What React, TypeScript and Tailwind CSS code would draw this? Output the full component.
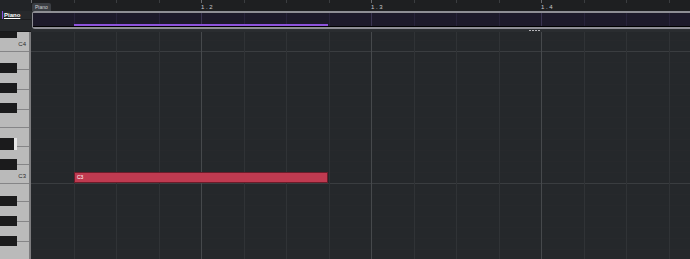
import React from "react";
import clsx from "clsx";

const COLS = Array.from({ length: 16 }, (_, i) => i);

// white keys from top of the keyboard (y 32), heights include the bottom border
const whiteKeys: { h: string; label?: string }[] = [
  { h: "h-[20px]", label: "C4" },
  { h: "h-[18px]" },
  { h: "h-[20px]" },
  { h: "h-[20px]" },
  { h: "h-[18px]" },
  { h: "h-[19px]" },
  { h: "h-[18px]" },
  { h: "h-[19px]", label: "C3" },
  { h: "h-[18px]" },
  { h: "h-[20px]" },
  { h: "h-[20px]" },
  { h: "h-[20px]" },
];

const blackKeys = [
  "top-[-5px] h-[11px]",
  "top-[31px] h-[10px]",
  "top-[51px] h-[10px]",
  "top-[71px] h-[10px]",
  "top-[127px] h-[11px]",
  "top-[164px] h-[10px]",
  "top-[184px] h-[10px]",
  "top-[204px] h-[10px]",
];

const Columns: React.FC<{ minor: string; major: string }> = ({ minor, major }) => (
  <div className="pointer-events-none absolute inset-y-0 left-0 flex">
    {COLS.map((i) => (
      <div
        key={i}
        className={clsx(
          "w-[42.5px] shrink-0",
          i === 0 ? "" : "border-l",
          i % 4 === 0 ? major : minor
        )}
      />
    ))}
  </div>
);

const Ruler: React.FC = () => (
  <div className="relative flex h-[11px] overflow-hidden bg-[#1e1f21]">
    {COLS.map((i) => (
      <div key={i} className="flex w-[42.5px] shrink-0 flex-col">
        <div className={clsx("w-px", i % 4 === 0 ? "h-[3px] bg-[#6a6c70]" : "h-[3px] bg-[#3b3d40]")} />
        {i % 4 === 0 && i > 0 && (
          <span className="mt-[1px] whitespace-nowrap text-[6px] leading-none text-[#c9c9cc]">
            {`1 . ${i / 4 + 1}`}
          </span>
        )}
      </div>
    ))}
    <div className="absolute left-[1px] top-[3px] flex h-[8px] items-center rounded-t-[2px] bg-[#3b3e43] px-[3px]">
      <span className="text-[5px] leading-none text-[#d0d0d4]">Piano</span>
    </div>
  </div>
);

const Lane: React.FC = () => (
  <div className="flex h-[21px] flex-col">
    <div className="ml-[1px] flex h-[18px] flex-col rounded-l-[3px] border-y-2 border-l border-[#8e8e94]">
      <div className="relative flex flex-1 flex-col justify-end overflow-hidden border-b border-black bg-[#1d1a2a]">
        <div className="absolute inset-y-0 left-[-2px]">
          <Columns minor="border-[#28233a]" major="border-[#3a3450]" />
        </div>
        <div className="relative ml-[41px] h-[2px] w-[254px] bg-[#8d52dc]" />
      </div>
    </div>
    <div className="flex h-[3px] items-end gap-[1px] bg-[#2a2d30] pb-[1px] pl-[498px]">
      <div className="h-px w-[2px] bg-[#b4b4b8]" />
      <div className="h-px w-[2px] bg-[#b4b4b8]" />
      <div className="h-px w-[2px] bg-[#b4b4b8]" />
      <div className="h-px w-[2px] bg-[#b4b4b8]" />
    </div>
  </div>
);

const Keyboard: React.FC = () => (
  <div className="relative w-[31px] shrink-0 overflow-hidden border-r-2 border-[#7c7c7e]">
    <div className="flex flex-col">
      {whiteKeys.map((k, i) => (
        <div
          key={i}
          className={clsx(
            "flex shrink-0 items-end justify-end border-b border-[#858587] bg-[#bababa] pb-[4px] pr-[3px]",
            k.h
          )}
        >
          {k.label && (
            <span className="text-[6px] leading-none text-[#2a2a2a]">{k.label}</span>
          )}
        </div>
      ))}
    </div>
    {blackKeys.map((c, i) => (
      <div key={i} className={clsx("absolute left-0 w-[17px] bg-[#1b1b1c]", c)} />
    ))}
    <div className="absolute left-0 top-[106px] flex h-[12px] w-[17px]">
      <div className="w-[14px] bg-[#1b1b1c]" />
      <div className="w-[3px] bg-[#e6e6e6]" />
    </div>
  </div>
);

const rows = Array.from({ length: 21 }, (_, i) => i);

const Grid: React.FC = () => (
  <div className="relative flex-1 overflow-hidden bg-[#25282b]">
    <div className="flex flex-col">
      {rows.map((i) => (
        <div
          key={i}
          className={clsx(
            "shrink-0 border-b",
            i === 0 ? "h-[9px]" : "h-[11px]",
            i === 1 || i === 13 ? "border-[#3a3d40]" : "border-[#27292c]"
          )}
        />
      ))}
    </div>
    <Columns minor="border-[#303336]" major="border-[#46494c]" />
    <div className="absolute left-[43px] top-[140px] flex h-[11px] w-[254px] items-center border border-[#6b1c2a] bg-[#bf3a50] pl-[2px]">
      <span className="text-[5px] leading-none text-white">C3</span>
    </div>
  </div>
);

const App: React.FC = () => {
  return (
    <div className="flex h-[259px] w-[690px] flex-col overflow-hidden bg-[#25282b] font-['Liberation_Sans',sans-serif]">
      <div className="flex h-[32px] shrink-0">
        <div className="flex w-[31px] shrink-0 flex-col bg-[#27292c]">
          <div className="h-[11px] bg-[#222427]" />
          <div className="flex h-[9px] items-center gap-[1px] border-b border-[#1c1d1f] pl-[2px]">
            <div className="h-full w-[1px] bg-[#8d52dc]" />
            <span className="text-[6px] font-bold leading-none text-white underline">Piano</span>
          </div>
          <div className="flex-1 border-b border-[#18191b]" />
        </div>
        <div className="flex flex-1 flex-col overflow-hidden">
          <Ruler />
          <Lane />
        </div>
      </div>
      <div className="flex flex-1 overflow-hidden">
        <Keyboard />
        <Grid />
      </div>
    </div>
  );
};

export default App;
